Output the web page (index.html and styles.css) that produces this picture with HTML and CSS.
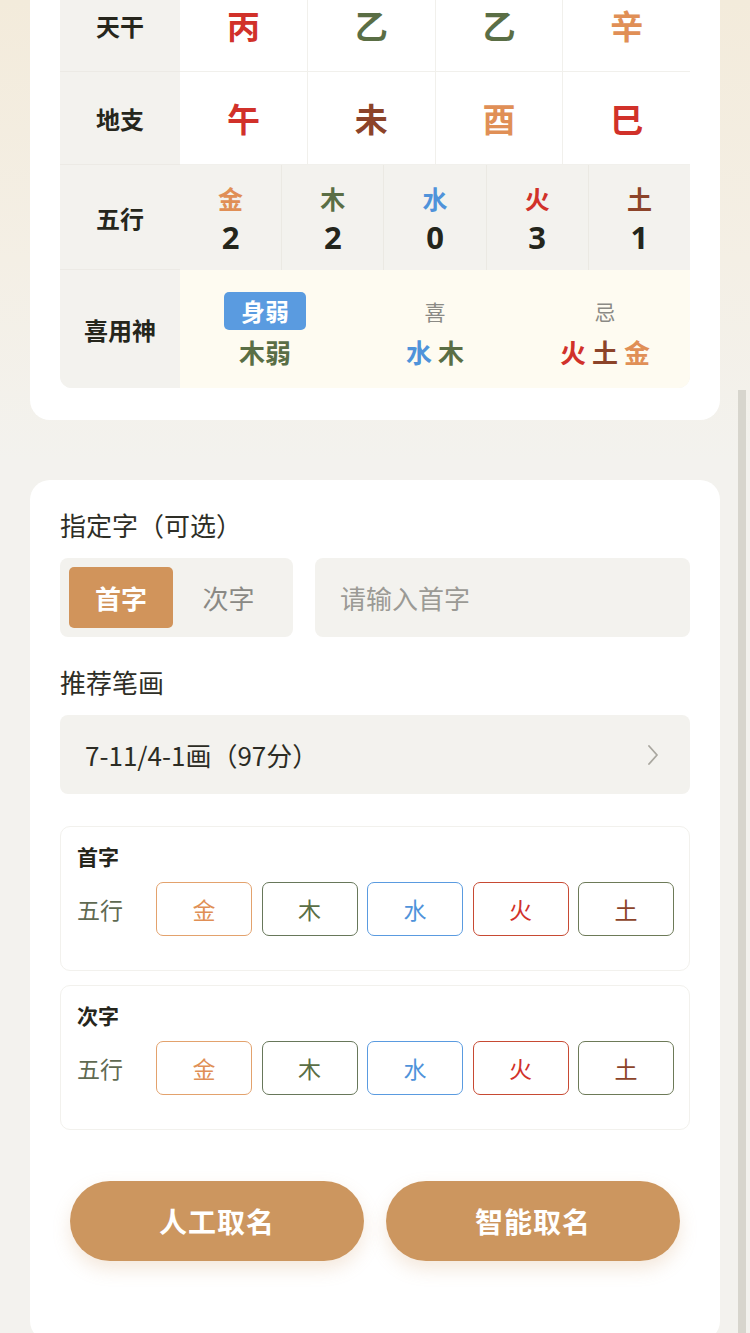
FILE: index.html
```html
<!DOCTYPE html>
<html lang="zh">
<head>
<meta charset="utf-8">
<title>取名</title>
<link rel="stylesheet" href="styles.css">
</head>
<body>
<div class="page">
  <section class="card card-top">
    <div class="bazi">
      <div class="row row-std">
        <div class="lbl">天干</div>
        <div class="vals">
          <div class="cell"><span class="big huo">丙</span></div>
          <div class="cell"><span class="big mu">乙</span></div>
          <div class="cell"><span class="big mu">乙</span></div>
          <div class="cell"><span class="big jin">辛</span></div>
        </div>
      </div>
      <div class="row row-std">
        <div class="lbl">地支</div>
        <div class="vals">
          <div class="cell"><span class="big huo">午</span></div>
          <div class="cell"><span class="big tu">未</span></div>
          <div class="cell"><span class="big jin">酉</span></div>
          <div class="cell"><span class="big huo">巳</span></div>
        </div>
      </div>
      <div class="row row-wx">
        <div class="lbl">五行</div>
        <div class="vals wx">
          <div class="wcell"><span class="el jin">金</span><span class="num">2</span></div>
          <div class="wcell"><span class="el mu">木</span><span class="num">2</span></div>
          <div class="wcell"><span class="el shui">水</span><span class="num">0</span></div>
          <div class="wcell"><span class="el huo">火</span><span class="num">3</span></div>
          <div class="wcell"><span class="el tu">土</span><span class="num">1</span></div>
        </div>
      </div>
      <div class="row row-xy">
        <div class="lbl">喜用神</div>
        <div class="vals xy">
          <div class="xcell"><span class="badge">身弱</span><span class="xv mu">木弱</span></div>
          <div class="xcell"><span class="xt">喜</span><span class="xv"><span class="shui">水</span> <span class="mu">木</span></span></div>
          <div class="xcell"><span class="xt">忌</span><span class="xv"><span class="huo">火</span> <span class="tu">土</span> <span class="jin">金</span></span></div>
        </div>
      </div>
    </div>
  </section>

  <section class="card card-form">
    <div class="flabel">指定字（可选）</div>
    <div class="pick">
      <div class="seg">
        <span class="seg-item active">首字</span>
        <span class="seg-item">次字</span>
      </div>
      <div class="input">请输入首字</div>
    </div>

    <div class="flabel flabel-2">推荐笔画</div>
    <div class="select">
      <span>7-11/4-1画（97分）</span>
      <svg class="chev" width="14" height="24" viewBox="0 0 14 24"><path d="M3 3 L11 12 L3 21" fill="none" stroke="#a9a79f" stroke-width="1.8" stroke-linecap="round" stroke-linejoin="round"/></svg>
    </div>

    <div class="sub">
      <div class="sub-title">首字</div>
      <div class="wx-row">
        <span class="wx-lbl">五行</span>
        <div class="chips">
          <span class="chip c-jin">金</span>
          <span class="chip c-mu">木</span>
          <span class="chip c-shui">水</span>
          <span class="chip c-huo">火</span>
          <span class="chip c-tu">土</span>
        </div>
      </div>
    </div>

    <div class="sub">
      <div class="sub-title">次字</div>
      <div class="wx-row">
        <span class="wx-lbl">五行</span>
        <div class="chips">
          <span class="chip c-jin">金</span>
          <span class="chip c-mu">木</span>
          <span class="chip c-shui">水</span>
          <span class="chip c-huo">火</span>
          <span class="chip c-tu">土</span>
        </div>
      </div>
    </div>

    <div class="actions">
      <button class="btn">人工取名</button>
      <button class="btn">智能取名</button>
    </div>
  </section>
</div>
<div class="scrollbar"></div>
</body>
</html>
```
FILE: styles.css
```css
html, body {
  margin: 0;
  padding: 0;
}
body {
  font-family: "Noto Sans CJK SC", "Noto Sans", sans-serif;
  background: linear-gradient(180deg, #f3ebdb 0px, #f4efe5 260px, #f3f2ee 460px, #f3f2ee 100%);
  min-height: 1333px;
  overflow: hidden;
  color: #2b2b22;
}
.page {
  margin-top: -21px;
  padding: 0 30px;
  display: flex;
  flex-direction: column;
  gap: 60px;
}
.card {
  background: #fff;
  border-radius: 20px;
}
.card-top {
  padding: 0 30px 32px;
  border-radius: 0 0 20px 20px;
}

/* ---------- bazi table ---------- */
.bazi {
  border-radius: 12px;
  overflow: hidden;
  background: #f3f2ee;
}
.row {
  display: flex;
}
.lbl {
  width: 120px;
  flex: none;
  display: flex;
  align-items: center;
  justify-content: center;
  font-size: 24px;
  font-weight: 700;
  color: #26261c;
  background: #f3f2ee;
  border-bottom: 1px solid #eceae5;
  box-sizing: border-box;
}
.row-xy .lbl { border-bottom: none; }
.vals {
  flex: 1;
  display: flex;
}
.row-std { height: 93px; }
.row-std .vals { background: #fff; }
.cell {
  flex: 1;
  display: flex;
  align-items: center;
  justify-content: center;
  border-left: 1px solid #f1f0ec;
  border-bottom: 1px solid #f1f0ec;
}
.cell:first-child { border-left: none; }
.big {
  font-size: 33px;
  font-weight: 700;
  line-height: 1;
}
.huo { color: #d1312a; }
.mu { color: #5a6e45; }
.jin { color: #e08f56; }
.tu { color: #8c4329; }
.shui { color: #4f93da; }

.row-wx { height: 105px; }
.wx { background: #f3f2ee; }
.wcell {
  flex: 1;
  display: flex;
  flex-direction: column;
  align-items: center;
  justify-content: center;
  gap: 14px;
  border-left: 1px solid #ebe9e3;
}
.wcell:first-child { border-left: none; }
.el {
  font-size: 25px;
  font-weight: 700;
  line-height: 1;
}
.num {
  font-family: "Noto Sans", "Roboto", sans-serif;
  font-size: 31px;
  font-weight: 700;
  line-height: 24px;
  color: #24251b;
}

.row-xy { height: 118px; }
.xy { background: #fefbf1; }
.xcell {
  flex: 1;
  display: flex;
  flex-direction: column;
  align-items: center;
  justify-content: center;
  gap: 6px;
  padding-top: 2px;
}
.badge {
  background: #5a9be0;
  color: #fff;
  font-size: 24px;
  font-weight: 700;
  line-height: 38px;
  height: 38px;
  padding: 0 17px;
  border-radius: 5px;
}
.xt {
  font-size: 21px;
  color: #8b8a85;
  line-height: 38px;
  height: 38px;
}
.xv {
  font-size: 26px;
  font-weight: 700;
  line-height: 1.2;
  white-space: pre;
}

/* ---------- form card ---------- */
.card-form {
  padding: 26px 30px 80px;
}
.flabel {
  font-size: 26px;
  color: #2e2e26;
  line-height: 38px;
}
.flabel-2 {
  margin-top: 26px;
}
.pick {
  margin-top: 14px;
  display: flex;
  gap: 22px;
}
.seg {
  width: 233px;
  height: 79px;
  box-sizing: border-box;
  flex: none;
  padding: 9px;
  background: #f3f2ee;
  border-radius: 8px;
  display: flex;
  align-items: stretch;
}
.seg-item {
  flex: 1;
  display: flex;
  align-items: center;
  justify-content: center;
  font-size: 26px;
  color: #8a8984;
}
.seg-item.active {
  flex: none;
  width: 104px;
  background: #d1945b;
  color: #fff;
  font-weight: 700;
  border-radius: 5px;
}
.input {
  flex: 1;
  height: 79px;
  background: #f3f2ee;
  border-radius: 8px;
  display: flex;
  align-items: center;
  padding-left: 25px;
  font-size: 26px;
  color: #9b9a95;
}
.select {
  margin-top: 14px;
  height: 79px;
  background: #f3f2ee;
  border-radius: 8px;
  display: flex;
  align-items: center;
  justify-content: space-between;
  padding: 0 30px 0 25px;
  font-size: 26px;
  color: #2c2c24;
}
.chev { display: block; }

.sub {
  margin-top: 32px;
  border: 1px solid #f2f1ed;
  border-radius: 10px;
  padding: 14px 15px 34px 16px;
}
.sub + .sub { margin-top: 14px; }
.sub-title {
  font-size: 21px;
  font-weight: 700;
  color: #26261c;
  line-height: 30px;
}
.wx-row {
  margin-top: 11px;
  display: flex;
  align-items: center;
}
.wx-lbl {
  width: 79px;
  flex: none;
  font-size: 23px;
  color: #5f6a52;
}
.chips {
  flex: 1;
  display: flex;
  gap: 9.5px;
}
.chip {
  flex: 1;
  height: 54px;
  box-sizing: border-box;
  border: 1.5px solid;
  border-radius: 7px;
  display: flex;
  align-items: center;
  justify-content: center;
  font-size: 23px;
}
.c-jin { border-color: #e3a26d; color: #e08f56; }
.c-mu { border-color: #67775a; color: #5a6e45; }
.c-shui { border-color: #5a9be0; color: #4f93da; }
.c-huo { border-color: #c74a33; color: #d1312a; }
.c-tu { border-color: #6d7a58; color: #8c4329; }

.actions {
  margin-top: 51px;
  padding: 0 10px;
  display: flex;
  gap: 22px;
}
.btn {
  flex: 1;
  height: 80px;
  border: none;
  border-radius: 40px;
  background: #cc965f;
  color: #fff;
  font-family: "Noto Sans CJK SC", "Noto Sans", sans-serif;
  font-size: 28px;
  font-weight: 700;
  letter-spacing: 1px;
  box-shadow: 0 8px 18px rgba(204, 150, 95, 0.22);
}

.scrollbar {
  position: fixed;
  right: 4px;
  top: 390px;
  bottom: 0;
  width: 8px;
  background: #d7d5cd;
}
```
